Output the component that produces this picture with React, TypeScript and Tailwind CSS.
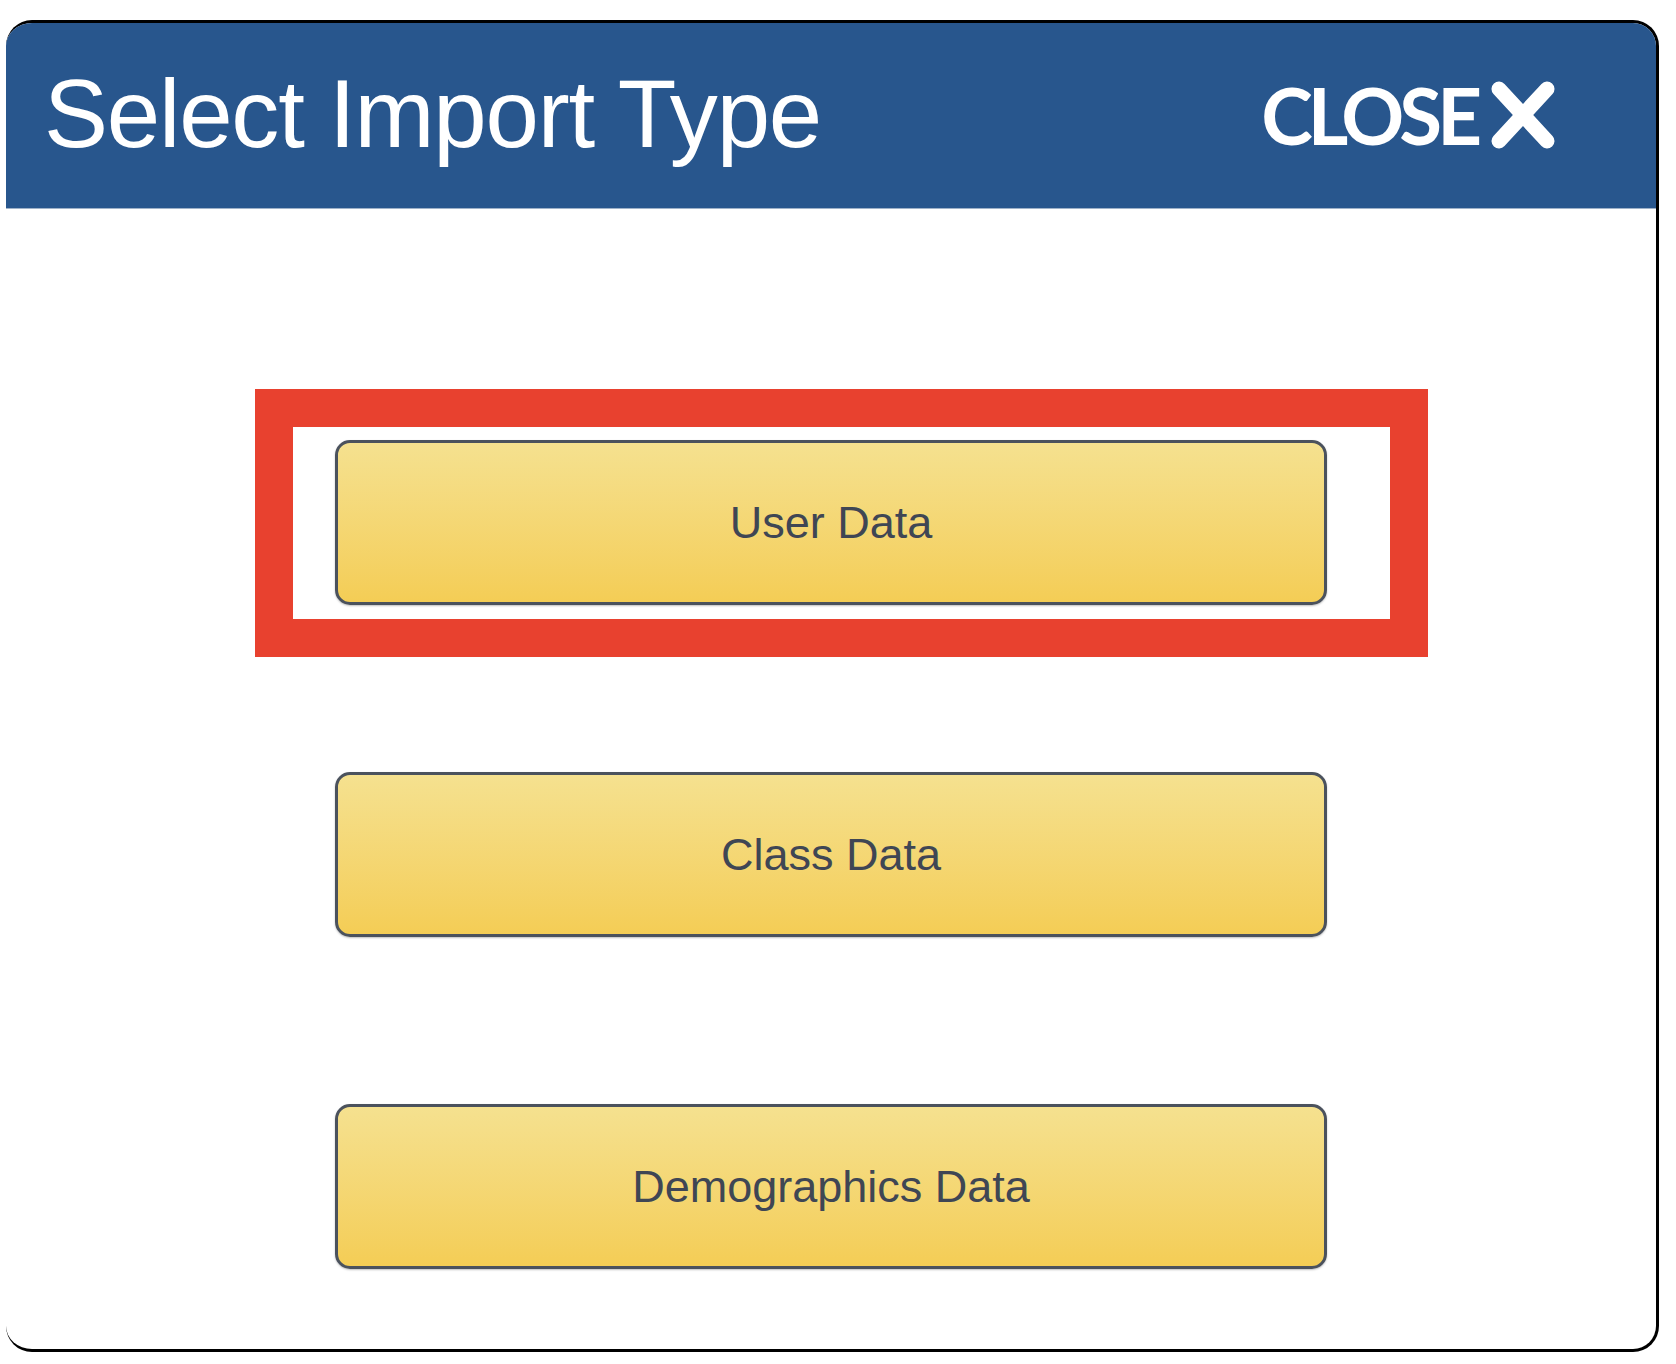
import React from "react";

function CloseX() {
  return (
    <svg width="64" height="68" viewBox="0 0 64 68" aria-hidden="true">
      <line x1="8" y1="8" x2="56" y2="60" stroke="#ffffff" strokeWidth="15" strokeLinecap="round" />
      <line x1="56" y1="8" x2="8" y2="60" stroke="#ffffff" strokeWidth="15" strokeLinecap="round" />
    </svg>
  );
}

function ImportButton({ label }: { label: string }) {
  return (
    <button
      type="button"
      className="flex h-[165px] w-[992px] shrink-0 items-center justify-center rounded-[15px] border-[3px] border-[#4b525d] bg-gradient-to-b from-[#f5e18f] to-[#f4cd55] text-[45px] leading-none text-[#3f4654] shadow-[0_1px_2px_rgba(0,0,0,0.25)]"
      style={{ fontFamily: '"Liberation Sans", Arial, Helvetica, sans-serif' }}
    >
      {label}
    </button>
  );
}

export default function App() {
  return (
    <div className="min-h-[1364px] w-[1676px] bg-white pt-[20px]">
      <div className="relative ml-[6px] flex h-[1332px] w-[1653px] flex-col overflow-hidden rounded-[26px] border-[3px] border-l-0 border-black bg-white">
        <div className="flex h-[186px] shrink-0 items-center justify-between border-b border-[#9fb2c9] bg-[#28568d] pl-[38px] pr-[101px] pb-[4px]">
          <h1
            className="text-[96px] leading-none tracking-[-1.2px] text-white"
            style={{ fontFamily: '"Liberation Sans", Arial, Helvetica, sans-serif' }}
          >
            Select Import Type
          </h1>
          <div className="flex items-center gap-[14px] pt-[2px]">
            <span
              className="text-[78px] font-bold leading-none tracking-[-5px] text-white"
              style={{ fontFamily: 'Lato, "Open Sans", sans-serif' }}
            >
              CLOSE
            </span>
            <CloseX />
          </div>
        </div>
        <div className="flex flex-1 flex-col items-center gap-[167px] pt-[231px]">
          <ImportButton label="User Data" />
          <ImportButton label="Class Data" />
          <ImportButton label="Demographics Data" />
        </div>
      </div>
      <div className="pointer-events-none absolute left-[255px] top-[389px] h-[268px] w-[1173px] border-[38px] border-[#e8412f]" />
    </div>
  );
}
